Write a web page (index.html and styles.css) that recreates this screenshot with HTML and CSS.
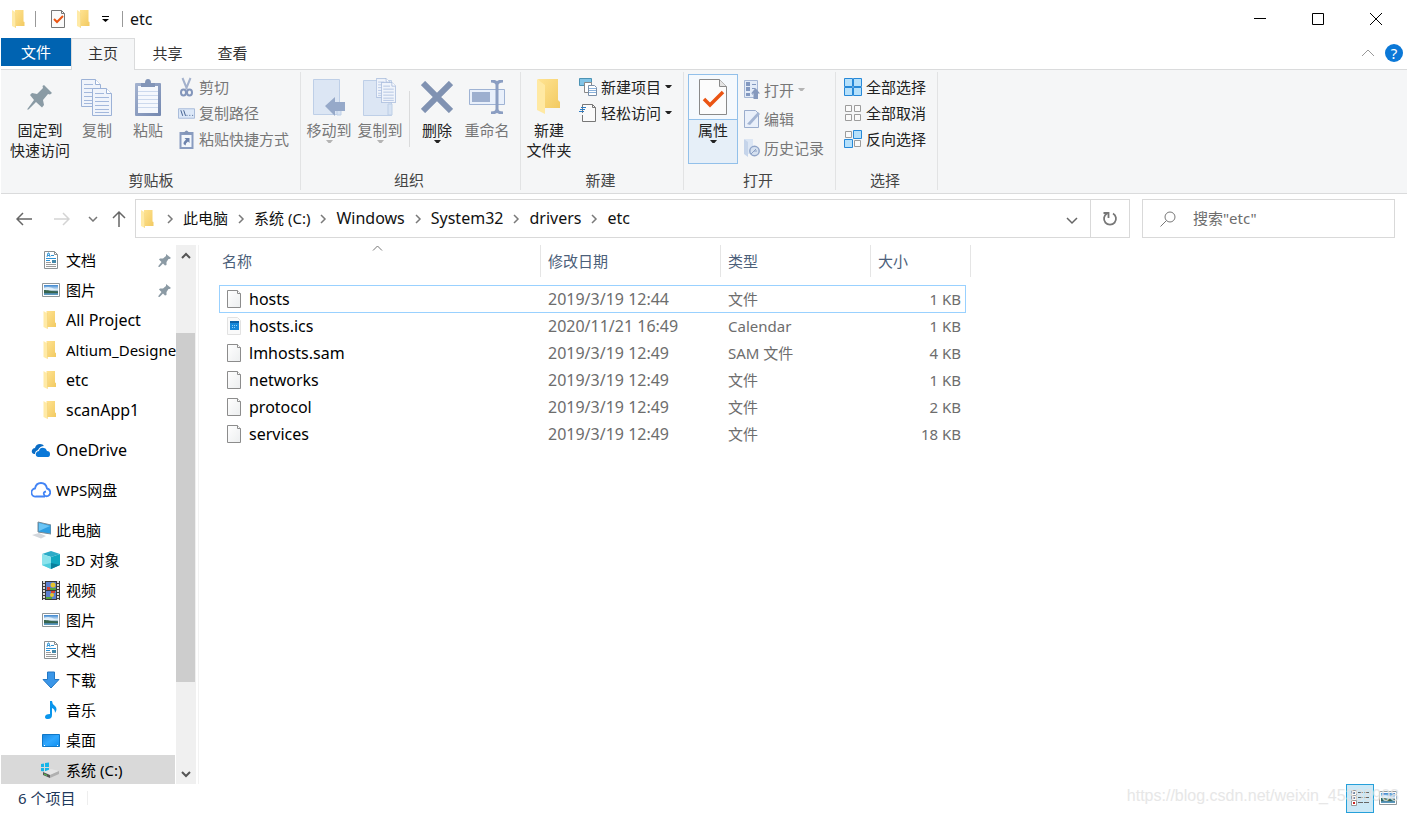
FILE: index.html
```html
<!DOCTYPE html>
<html lang="zh-CN">
<head>
<meta charset="utf-8">
<title>etc</title>
<link rel="stylesheet" href="styles.css">
</head>
<body>
<svg class="sprite" aria-hidden="true">
  <defs>
    <linearGradient id="g-folder" x1="0" y1="0" x2="1" y2="1"><stop offset="0" stop-color="#ffe391"/><stop offset="1" stop-color="#f2ca62"/></linearGradient>
    <linearGradient id="g-paper" x1="0" y1="0" x2="1" y2="1"><stop offset="0" stop-color="#fff"/><stop offset="1" stop-color="#eceeef"/></linearGradient>
    <linearGradient id="g-sky" x1="0" y1="0" x2="0" y2="1"><stop offset="0" stop-color="#3b85cf"/><stop offset=".5" stop-color="#e6f3fa"/><stop offset=".65" stop-color="#3e6d77"/><stop offset="1" stop-color="#5fa0ca"/></linearGradient>
    <linearGradient id="g-blue" x1="0" y1="0" x2="1" y2="1"><stop offset="0" stop-color="#1a86e0"/><stop offset=".5" stop-color="#30a8ff"/><stop offset="1" stop-color="#0f8ff0"/></linearGradient>
    <linearGradient id="g-clip" x1="0" y1="0" x2="1" y2="1"><stop offset="0" stop-color="#a4b3d0"/><stop offset="1" stop-color="#7488b0"/></linearGradient>
  </defs>
  <symbol id="folder" viewBox="0 0 13 18">
    <path d="M3 0h8.500v11.500l1 .5v4H3z" fill="url(#g-folder)"/>
    <path d="M0 0l4 2.500v15.500l-4-2z" fill="#ffeaa6"/><path d="M3.500 2l.5.500v15.500l-.5-.5z" fill="#f2cf72"/>
  </symbol>
  <symbol id="file" viewBox="0 0 16 20">
    <path d="M1.500 1.500h10l3 3v14h-13z" fill="url(#g-paper)" stroke="#8c8c8c"/>
    <path d="M11.500 1.500v3h3" fill="#fff" stroke="#8c8c8c"/>
  </symbol>
  <symbol id="doc" viewBox="0 0 18 20">
    <path d="M2.500 1.500h10l3 3v14h-13z" fill="#fff" stroke="#8a9092"/><path d="M12.500 1.500v3h3" fill="none" stroke="#8a9092"/>
    <path d="M5 7l1-4h1l1 4M5.500 5.500h2M9 5.500h3M4 8.500h10M4 10.500h4" stroke="#2f93d6" fill="none"/>
    <path d="M4 12.500h5M4 14.500h10M4 16.500h10" stroke="#9b9b9b"/><path d="M10 10h4v3h-4z" fill="#4388aa"/>
  </symbol>
  <symbol id="picture" viewBox="0 0 18 14">
    <path d="M.5.500h17v13H.5z" fill="#fff" stroke="#8f979a"/><path d="M2 2h14v10H2z" fill="url(#g-sky)"/>
    <path d="M2 7c3 0 7 1 14 2v1H2z" fill="#37654d"/><path d="M2 5q5-3 12 2H2z" fill="#e8f4fb" opacity=".8"/>
  </symbol>
  <symbol id="smallpin" viewBox="0 0 13 13">
    <path d="M8 0l5 4-1.500 1-1 0-2 3v3l-1.500.500L5 9.500 1.500 13 0 12.500 3.500 8 1 5.500 2 4.500h3L8 2z" fill="#8b9aa4"/>
  </symbol>
  <symbol id="chevron" viewBox="0 0 26 12"><path d="M11 2l4 4-4 4" fill="none" stroke="#7a7a7a" stroke-width="1.500"/></symbol>
  <symbol id="caret" viewBox="0 0 7 4"><path d="M0 0h7L4.500 3h-2z" fill="currentColor"/></symbol>
  <symbol id="sheet" viewBox="0 0 20 28">
    <path d="M.5.500h14l5 5v22H.5z" fill="#f0f4fb" stroke="#9cb2d7"/><path d="M14.500.5v5h5" fill="#fff" stroke="#9cb2d7"/>
    <path d="M3 5.500h9M3 9.500h14M3 13.500h14M3 17.500h14M3 21.500h14M3 24.500h14" stroke="#a3b8dc"/>
  </symbol>
  <symbol id="checked" viewBox="0 0 28 36">
    <path d="M.5.500h20l7 7v28H.5z" fill="#fcfcfc" stroke="#8a8a8a"/><path d="M20.500.5v7h7" fill="#e4e4e4" stroke="#8a8a8a"/>
    <path d="M5 20l6 6L24 13" fill="none" stroke="#ea5413" stroke-width="3.500"/>
  </symbol>
</svg>

<header class="titlebar">
  <svg class="ico-folder"><use href="#folder"/></svg>
  <span class="bar"></span>
  <button class="quick" aria-label="属性"><svg width="14" height="18" viewBox="0 0 14 18"><path d="M.5.500h10l3 3v14H.5z" fill="#fafafa" stroke="#777"/><path d="M10.500.5v3h3" fill="none" stroke="#777"/><path d="M3 9l3 3 6-6" fill="none" stroke="#ea5413" stroke-width="2"/></svg></button>
  <button class="quick" aria-label="新建文件夹"><svg class="ico-folder"><use href="#folder"/></svg></button>
  <button class="quick quick-more" aria-label="自定义快速访问工具栏"><svg width="7" height="6" viewBox="0 0 7 6"><path d="M0 .500h7" stroke="#000"/><path d="M0 3h7L3.500 6z"/></svg></button>
  <span class="bar"></span>
  <h1 class="title">etc</h1>
  <div class="caption">
    <button aria-label="最小化"><svg width="12" height="12"><path d="M0 5.500h12" stroke="#000"/></svg></button>
    <button aria-label="最大化"><svg width="12" height="12"><path d="M.5.500h11v11H.5z" fill="none" stroke="#000"/></svg></button>
    <button aria-label="关闭"><svg width="12" height="12"><path d="M0 0l12 12M12 0L0 12" stroke="#000"/></svg></button>
  </div>
</header>

<nav class="tabs">
  <button class="tab tab-file">文件</button>
  <button class="tab tab-active">主页</button>
  <button class="tab">共享</button>
  <button class="tab">查看</button>
  <div class="tab-tools">
    <button aria-label="最小化功能区"><svg width="14" height="8"><path d="M1 7l6-6 6 6" fill="none" stroke="#999"/></svg></button>
    <button class="help" aria-label="帮助">?</button>
  </div>
</nav>

<div class="ribbon">
  <section class="group g-clipboard">
    <div class="tools">
      <button class="big w60"><span class="pic"><svg width="26" height="26" viewBox="0 0 26 26"><path d="M17 1l8 8-2 1.500-2-.5-5 6 1 5-2 2.500-6-5.500-7.500 7.500L0 25.500 7 16 3 11l2-2 5 1 6-6-.5-2z" fill="#8a9ba5"/></svg></span>固定到<br>快速访问</button>
      <button class="big w54 off"><span class="pic"><svg width="32" height="37" viewBox="0 0 32 37"><use href="#sheet" width="20" height="28"/><use href="#sheet" x="11" y="9" width="20" height="28"/></svg></span>复制</button>
      <button class="big w48 off"><span class="pic"><svg width="26" height="37" viewBox="0 0 26 37"><rect y="4" width="26" height="33" rx="1" fill="url(#g-clip)"/><path d="M3 7h20v27H3z" fill="#f5f8fd"/><path d="M3 12.500h20M3 16.500h20M3 20.500h20M3 24.500h20M3 28.500h20" stroke="#ccd9ed"/><path d="M6 8V4h4q0-4 3-4t3 4h4v4z" fill="#8295b8"/></svg></span>粘贴</button>
      <div class="stack off">
        <button><svg width="16" height="20" viewBox="0 0 16 20"><path d="M4 1l4.500 11M12 1L7.500 12" stroke="#a3b1cc" stroke-width="2"/><g fill="none" stroke="#8396bb" stroke-width="2"><ellipse cx="5" cy="15.500" rx="2.500" ry="3"/><ellipse cx="11" cy="15.500" rx="2.500" ry="3"/></g></svg>剪切</button>
        <button><svg width="18" height="11" viewBox="0 0 18 11"><path d="M.5.500h17v10H.5z" fill="#dce8f8" stroke="#a5b8d8"/><path d="M3 2l2 6M6 2l2 6M9 7.500h1M12 7.500h1M15 7.500h1" stroke="#3f5c8d"/></svg>复制路径</button>
        <button><svg width="16" height="19" viewBox="0 0 16 19"><path d="M1 2h14v17H1z" fill="#899cc0"/><path d="M3 5h10v12H3z" fill="#f3f7fc"/><path d="M5 4V2h1q2-3 4 0h1v2z" fill="#8295b8"/><path d="M6 8h5v5l-1.500-1.500Q7 13 7 15.500L5 14q0-2.500 2.500-4.500z" fill="#6d83ad"/></svg>粘贴快捷方式</button>
      </div>
    </div>
    <h2>剪贴板</h2>
  </section>

  <section class="group g-organize">
    <div class="tools">
      <button class="big w52 off"><span class="pic"><svg width="32" height="37" viewBox="0 0 32 37"><path d="M.5.500h26v35H.5z" fill="#dce6f4" stroke="#becfe7"/><path d="M24 24h4v12h-4z" fill="#d7e3f3" stroke="#becfe7"/><path d="M12 27l10-9v5h10v9H22v5z" fill="#96a9c9"/></svg></span>移动到<svg class="caret"><use href="#caret"/></svg></button>
      <button class="big w50 off"><span class="pic"><svg width="34" height="38" viewBox="0 0 34 38"><path d="M.5 2.500h28v35H.5z" fill="#dce6f4" stroke="#becfe7"/><path d="M25 26h4v11h-4z" fill="#d7e3f3" stroke="#becfe7"/><use href="#sheet" x="13" y="0" width="14" height="20"/><use href="#sheet" x="18" y="4" width="15" height="21"/></svg></span>复制到<svg class="caret"><use href="#caret"/></svg></button>
      <span class="tool-rule"></span>
      <button class="big w46"><span class="pic"><svg width="32" height="32" viewBox="0 0 32 32"><path d="M2 2l28 28M30 2L2 30" stroke="#8092b2" stroke-width="6"/></svg></span>删除<svg class="caret"><use href="#caret"/></svg></button>
      <button class="big w54 off"><span class="pic"><svg width="36" height="34" viewBox="0 0 36 34"><path d="M.5 9.500h35v15H.5z" fill="#e9f0fb" stroke="#9fb3d4"/><path d="M3 12h18v10H3z" fill="#9dafcf"/><path d="M28 3v28M22 1q6 0 6 4 0-4 6-4M22 33q6 0 6-4 0 4 6 4" fill="none" stroke="#8b9ec2" stroke-width="3"/></svg></span>重命名</button>
    </div>
    <h2>组织</h2>
  </section>

  <section class="group g-new">
    <div class="tools">
      <button class="big w48"><span class="pic"><svg width="25" height="36" viewBox="0 0 25 36"><path d="M1 0h20v21l2 2v6H7z" fill="url(#g-folder)"/><path d="M0 0l8 6v29l-8-4z" fill="#ffe9a3"/></svg></span>新建<br>文件夹</button>
      <div class="stack">
        <button><svg width="18" height="18" viewBox="0 0 18 18"><path d="M.5.500h12v7H.5z" fill="#82c4e6" stroke="#4c93b4"/><path d="M5.500 4.500h7v10h-7z" fill="#fff" stroke="#888"/><path d="M9.500 7.500h6l2 2v8h-8z" fill="#fff" stroke="#7a8fa8"/><path d="M10 10.500h7M10 12.500h7M10 14.500h7" stroke="#8ab2dc"/></svg>新建项目<svg class="caret"><use href="#caret"/></svg></button>
        <button><svg width="18" height="18" viewBox="0 0 18 18"><path d="M3.500 9V.500h10l3 3v14h-13V11" fill="#fafafa" stroke="#777"/><path d="M13.500.5v3h3" fill="none" stroke="#777"/><path d="M2 3.500h5M1 5.500h5M0 7.500h5" stroke="#2c7cc4"/></svg>轻松访问<svg class="caret"><use href="#caret"/></svg></button>
      </div>
    </div>
    <h2>新建</h2>
  </section>

  <section class="group g-open">
    <div class="tools">
      <button class="big w50 big-hot"><span class="pic"><svg width="28" height="36"><use href="#checked"/></svg></span>属性<svg class="caret"><use href="#caret"/></svg></button>
      <div class="stack stack-loose off">
        <button><svg width="16" height="19" viewBox="0 0 16 19"><path d="M.5.500h13v17H.5z" fill="#e3ebf7" stroke="#a6b7d5"/><path d="M2 2h4v4H2zM2 7h4v4H2zM2 13h4v3H2z" fill="#8298c0"/><path d="M8 4.500h4M8 8.500h3M8 14h1" stroke="#8298c0"/><path d="M11.500 8l4.500 5.500h-2V19H9.500v-5.500H7z" fill="#8699bd"/></svg>打开<svg class="caret"><use href="#caret"/></svg></button>
        <button><svg width="16" height="18" viewBox="0 0 16 18"><path d="M.5.500h11l3 3v14H.5z" fill="#eaf0fa" stroke="#9badcd"/><path d="M3 14L14 2l2 2L6 15z" fill="#a4b5d3"/></svg>编辑</button>
        <button><svg width="16" height="18" viewBox="0 0 16 18"><path d="M1 0h8v15H1z" fill="#dce6f4"/><path d="M0 0l4 3v15l-4-3z" fill="#c5d4ea"/><circle cx="10.500" cy="12" r="4.700" fill="#d6e1f0" stroke="#91a5c8" stroke-width="1.500"/><path d="M7 15l5-5M10 12h3" stroke="#8ba0c4"/></svg>历史记录</button>
      </div>
    </div>
    <h2>打开</h2>
  </section>

  <section class="group g-select">
    <div class="tools">
      <div class="stack">
        <button><svg width="18" height="18" viewBox="0 0 18 18"><g fill="#b5e0fb" stroke="#2789d8"><path d="M.5.500h8v8h-8zM9.500.500h8v8h-8zM.5 9.500h8v8h-8zM9.500 9.500h8v8h-8z"/></g></svg>全部选择</button>
        <button><svg width="18" height="18" viewBox="0 0 18 18"><g fill="#fafafa" stroke="#9c9c9c"><path d="M1.500 1.500h6v6h-6zM10.500 1.500h6v6h-6zM1.500 10.500h6v6h-6zM10.500 10.500h6v6h-6z"/></g></svg>全部取消</button>
        <button><svg width="18" height="18" viewBox="0 0 18 18"><path d="M1.500 1.500h6v6h-6zM10.500 10.500h6v6h-6z" fill="#fafafa" stroke="#9c9c9c"/><path d="M9.500.500h8v8h-8zM.5 9.500h8v8h-8z" fill="#b5e0fb" stroke="#2789d8"/></svg>反向选择</button>
      </div>
    </div>
    <h2>选择</h2>
  </section>
</div>

<div class="navbar">
  <div class="history">
    <button aria-label="返回"><svg width="16" height="14"><path d="M1 7h15M7 1L1 7l6 6" fill="none" stroke="#666" stroke-width="1.500"/></svg></button>
    <button aria-label="前进"><svg width="16" height="14"><path d="M0 7h15M9 1l6 6-6 6" fill="none" stroke="#d4d4d4" stroke-width="1.500"/></svg></button>
    <button class="recent" aria-label="最近浏览的位置"><svg width="10" height="6"><path d="M1 1l4 4 4-4" fill="none" stroke="#777" stroke-width="1.500"/></svg></button>
    <button class="up" aria-label="上移"><svg width="14" height="17"><path d="M7 17V2M1 8l6-6 6 6" fill="none" stroke="#666" stroke-width="1.500"/></svg></button>
  </div>
  <div class="address">
    <svg class="ico-folder"><use href="#folder"/></svg>
    <svg class="chev first"><use href="#chevron"/></svg><a href="#">此电脑</a>
    <svg class="chev"><use href="#chevron"/></svg><a href="#">系统 (C:)</a>
    <svg class="chev"><use href="#chevron"/></svg><a href="#" class="latin">Windows</a>
    <svg class="chev"><use href="#chevron"/></svg><a href="#" class="latin">System32</a>
    <svg class="chev"><use href="#chevron"/></svg><a href="#" class="latin">drivers</a>
    <svg class="chev"><use href="#chevron"/></svg><a href="#" class="latin">etc</a>
    <button class="drop" aria-label="以前的位置"><svg width="12" height="8"><path d="M1 1l5 5 5-5" fill="none" stroke="#666" stroke-width="1.500"/></svg></button>
    <button class="refresh" aria-label="刷新"><svg width="16" height="17" viewBox="0 0 16 17"><path d="M11 3.500a6 6 0 1 1-6 0M1.500 3h5v5" fill="none" stroke="#777" stroke-width="1.800"/></svg></button>
  </div>
  <label class="search">
    <svg width="16" height="16"><circle cx="10" cy="6" r="5" fill="none" stroke="#777"/><path d="M6.500 9.500L.5 15.500" stroke="#777"/></svg>
    <input type="text" placeholder='搜索"etc"' aria-label="搜索">
  </label>
</div>

<main class="main">
  <aside class="tree">
    <a href="#" class="lv2"><svg class="i20"><use href="#doc"/></svg><span>文档</span><svg class="pin"><use href="#smallpin"/></svg></a>
    <a href="#" class="lv2"><svg class="i14"><use href="#picture"/></svg><span>图片</span><svg class="pin"><use href="#smallpin"/></svg></a>
    <a href="#" class="lv2 latin"><svg class="i18"><use href="#folder"/></svg><span>All Project</span></a>
    <a href="#" class="lv2"><svg class="i18"><use href="#folder"/></svg><span>Altium_Designe</span></a>
    <a href="#" class="lv2 latin"><svg class="i18"><use href="#folder"/></svg><span>etc</span></a>
    <a href="#" class="lv2 latin"><svg class="i18"><use href="#folder"/></svg><span>scanApp1</span></a>
    <a href="#" class="lv1 latin"><svg width="20" height="13" viewBox="0 0 20 13"><path d="M4 10H3Q0 9 1 6q1-2 3-2 1-4 5-4 3 0 4 2-4 0-6 4-3 1-3 4z" fill="#0a6cc4"/><path d="M7 13q-3-1-2-4 1-2 3-2 1-4 5-3 2 0 3 3 3 0 3 3t-2 3z" fill="#0a78d8"/></svg><span>OneDrive</span></a>
    <a href="#" class="lv1"><svg width="20" height="16" viewBox="0 0 20 16"><path d="M14 14.500H5a4 4 0 0 1-1-8Q5 1 10 1t6 5.500a4 4 0 0 1 1 7.500q-3 1-4-1.500t2-3" fill="none" stroke="#4284f5" stroke-width="1.800"/></svg><span>WPS网盘</span></a>
    <a href="#" class="lv1"><svg width="20" height="18" viewBox="0 0 20 18"><path d="M7 1l13 3v9L7 11z" fill="#2e9ee2" stroke="#7a8b96"/><path d="M8 2l11 3-11 5z" fill="#6cc5f5"/><path d="M1 14l7-2 7 3-5 2.500z" fill="#d3d7dc"/></svg><span>此电脑</span></a>
    <a href="#" class="lv2"><svg width="18" height="18" viewBox="0 0 18 18"><path d="M9 0l9 3-9 3-9-3z" fill="#2cabc7"/><path d="M0 3l9 3v12l-9-4z" fill="#8be3ec"/><path d="M9 6l9-3v11l-9 4z" fill="#10a8c0"/><path d="M9 12l9 2-9 4z" fill="#087f9c"/><path d="M0 14l9-2v6z" fill="#4fcddd"/></svg><span>3D 对象</span></a>
    <a href="#" class="lv2"><svg width="18" height="19" viewBox="0 0 18 19"><path d="M0 0h18v19H0z" fill="#3a3a3a"/><path d="M4 1h10v8H4zM4 10h10v8H4z" fill="#5b7fd0"/><path d="M2 0v19M16 0v19" stroke="#ddd" stroke-width="2" stroke-dasharray="2 1"/><circle cx="11" cy="4" r="2.500" fill="#e5c52d"/><circle cx="10" cy="14" r="2" fill="#e5c52d"/><path d="M5 6h3v3H5zM9 10h4v2H9z" fill="#d64030"/><path d="M8 7h6v2H8zM4 16h6v2H4z" fill="#54a43e"/></svg><span>视频</span></a>
    <a href="#" class="lv2"><svg class="i14"><use href="#picture"/></svg><span>图片</span></a>
    <a href="#" class="lv2"><svg class="i20"><use href="#doc"/></svg><span>文档</span></a>
    <a href="#" class="lv2"><svg width="18" height="18" viewBox="0 0 18 18"><path d="M5.500 1h7v7.500h4.500L9 17 1 8.500h4.500z" fill="#3a96e8" stroke="#2277c4"/></svg><span>下载</span></a>
    <a href="#" class="lv2"><svg width="18" height="18" viewBox="0 0 18 18"><path d="M8 0h2q0 3 3 5 3 3 0 7 0-4-3-5v7q0 4-4 4-3 0-3-2 0-3 5-3z" fill="#0a96ec"/></svg><span>音乐</span></a>
    <a href="#" class="lv2"><svg width="18" height="13" viewBox="0 0 18 13"><path d="M.5.500h17v12H.5z" fill="url(#g-blue)" stroke="#0f78c8"/><path d="M2 11.500h1M15 11.500h1" stroke="#fff"/></svg><span>桌面</span></a>
    <a href="#" class="lv2 current"><svg width="20" height="16" viewBox="0 0 20 16"><path d="M1 2l3-.5V5H1zM5 1l4-.5V5H5zM1 6h3v3.500L1 9zM5 6h4v4l-4-.5z" fill="#16b5e8"/><path d="M3 10l8-3 8 2-9 4z" fill="#e5e5e5"/><path d="M10 13l9-4v3l-9 4z" fill="#b0b0b0"/><path d="M3 10l7 3v3l-7-3z" fill="#555"/><path d="M4 12l3 1.500" stroke="#56d34f"/></svg><span>系统 (C:)</span></a>
  </aside>
  <div class="scroll">
    <button aria-label="向上滚动"><svg width="10" height="7"><path d="M1 6l4-4 4 4" fill="none" stroke="#555" stroke-width="2"/></svg></button>
    <span class="track-before"></span><span class="thumb"></span><span class="track-after"></span>
    <button aria-label="向下滚动"><svg width="10" height="7"><path d="M1 1l4 4 4-4" fill="none" stroke="#555" stroke-width="2"/></svg></button>
  </div>
  <div class="list">
    <table>
      <thead><tr>
        <th class="c-name">名称<svg class="sort" width="11" height="6"><path d="M1 5.500l4.500-4.500L10 5.500" fill="none" stroke="#777"/></svg></th>
        <th class="c-date">修改日期</th><th class="c-type">类型</th><th class="c-size">大小</th>
      </tr></thead>
      <tbody>
        <tr class="focus"><td><svg class="fi"><use href="#file"/></svg>hosts</td><td>2019/3/19 12:44</td><td>文件</td><td>1 KB</td></tr>
        <tr><td><svg class="fi" viewBox="0 0 16 20"><path d="M1.500 1.500h10l3 3v14h-13z" fill="#fafafa" stroke="#e2e2e2"/><path d="M4 5h9v9H4z" fill="#1687d9"/><path d="M4 5h9v2H4z" fill="#0b62a8"/><path d="M6 9.500h6M6 11.500h4" stroke="#8fd0f6" stroke-dasharray="1 1"/></svg>hosts.ics</td><td>2020/11/21 16:49</td><td>Calendar</td><td>1 KB</td></tr>
        <tr><td><svg class="fi"><use href="#file"/></svg>lmhosts.sam</td><td>2019/3/19 12:49</td><td>SAM 文件</td><td>4 KB</td></tr>
        <tr><td><svg class="fi"><use href="#file"/></svg>networks</td><td>2019/3/19 12:49</td><td>文件</td><td>1 KB</td></tr>
        <tr><td><svg class="fi"><use href="#file"/></svg>protocol</td><td>2019/3/19 12:49</td><td>文件</td><td>2 KB</td></tr>
        <tr><td><svg class="fi"><use href="#file"/></svg>services</td><td>2019/3/19 12:49</td><td>文件</td><td>18 KB</td></tr>
      </tbody>
    </table>
  </div>
</main>

<footer class="status">
  <span class="count">6 个项目</span>
  <div class="views">
    <button class="view view-on" aria-label="详细信息"><svg width="18" height="16" viewBox="0 0 18 16"><g fill="#fff" stroke="#999"><path d="M.5.500h5v5h-5zM.5 5.500h5v5h-5zM.5 10.500h5v5h-5z"/></g><path d="M2 3h2M2 8h2" stroke="#68a" stroke-width="2"/><path d="M2 13h2" stroke="#c22" stroke-width="2"/><path d="M7 2.500h5M13 2.500h5M7 7.500h5M13 7.500h5M7 12.500h5M13 12.500h5" stroke="#666"/></svg></button>
    <button class="view" aria-label="大图标"><svg class="i14"><use href="#picture"/></svg></button>
  </div>
  <span class="watermark">https://blog.csdn.net/weixin_45388908</span>
</footer>
</body>
</html>
```
FILE: styles.css
```css
* { box-sizing: border-box; }

body {
  margin: 0;
  height: 100vh;
  display: flex;
  flex-direction: column;
  padding: 0 1px;
  background: #fff;
  color: #111;
  font: 15px/20px "Noto Sans", "Noto Sans CJK SC", sans-serif;
  overflow: hidden;
}

button {
  margin: 0;
  padding: 0;
  border: 0;
  background: none;
  color: inherit;
  font: inherit;
}

a { color: inherit; text-decoration: none; }
svg { flex: none; }
h1, h2 { margin: 0; font-weight: 400; }

.sprite { position: absolute; width: 0; height: 0; }
.latin { font-size: 16px; }
.ico-folder { width: 13px; height: 18px; display: block; }
.i14 { width: 18px; height: 14px; }
.i18 { width: 18px; height: 18px; }
.i20 { width: 18px; height: 20px; }

/* Title bar */
.titlebar { display: flex; align-items: center; height: 38px; padding-left: 11px; flex: none; }
.bar { width: 1px; height: 16px; background: #999; margin: 0 15px 0 10px; }
.quick { display: flex; margin-right: 12px; }
.quick-more { margin: 0 3px 0 0; }
.quick-more + .bar { margin-right: 7px; }
.title { font-size: 16px; }
.caption { margin: 0 2px 0 auto; display: flex; }
.caption button { width: 58px; height: 38px; display: flex; align-items: center; justify-content: center; }

/* Tabs */
.tabs { display: flex; height: 32px; flex: none; border-bottom: 1px solid #dadbdc; }
.tab { width: 65px; height: 31px; padding-bottom: 2px; color: #333; }
.tab-file { width: 70px; height: 28px; padding: 0; background: #0063b1; color: #fff; }
.tab-active { width: 64px; height: 32px; padding-bottom: 3px; background: #f5f6f7; border: 1px solid #dadbdc; border-bottom: 0; }
.tab-tools { margin-left: auto; display: flex; align-items: center; gap: 10px; padding: 0 4px 2px 0; }
.tab-tools button { display: flex; }
.tab-tools .help {
  width: 18px;
  height: 18px;
  border-radius: 50%;
  background: #0b78d7;
  color: #fff;
  justify-content: center;
  line-height: 18px;
}

/* Ribbon */
.ribbon { display: flex; flex: none; height: 124px; background: #f5f6f7; border-bottom: 1px solid #dadbdc; }
.group { display: flex; flex-direction: column; padding: 4px 0 3px; position: relative; }
.group::after { content: ""; position: absolute; right: 0; top: 2px; bottom: 3px; width: 1px; background: #e2e3e4; }
.group h2 { font-size: 15px; text-align: center; color: #444; margin-top: auto; padding-right: 4px; }
.g-clipboard h2 { padding-right: 0; }
.tools { display: flex; align-items: flex-start; }
.g-clipboard { width: 300px; }
.g-clipboard .tools { padding-left: 9px; }
.g-organize { width: 220px; }
.g-organize .tools { padding-left: 2px; }
.g-new { width: 163px; }
.g-new .tools, .g-open .tools { padding-left: 4px; }
.g-open { width: 152px; }
.g-select { width: 102px; }
.g-select .tools { padding-left: 8px; }
.g-select .stack { margin-left: 0; }

.big { display: flex; flex-direction: column; justify-content: flex-start; align-items: center; height: 90px; text-align: center; color: #222; white-space: nowrap; line-height: 20px; }
.pic { display: flex; height: 46px; align-items: center; justify-content: center; }
.big-hot { background: linear-gradient(#f5f9fd 0 45px, #92c0ea 45px 46px, #e6eff8 46px); outline: 1px solid #92c0ea; outline-offset: -1px; }
.w46 { width: 46px; }
.w48 { width: 48px; }
.w50 { width: 50px; }
.w52 { width: 52px; }
.w54 { width: 54px; }
.w60 { width: 60px; }
.off, .off button { color: #777; }
.caret { width: 7px; height: 4px; }
.off .caret { color: #b4b4b4; }
.tool-rule { width: 1px; height: 56px; margin: 17px 4px 0; background: #dadbdc; }

.stack { display: flex; flex-direction: column; margin-left: 6px; color: #222; }
.stack button { display: flex; align-items: center; gap: 4px; height: 26px; white-space: nowrap; }
.stack-loose { padding-top: 1px; }
.stack-loose button { height: 29px; }
.g-clipboard .stack svg { width: 17px; }

/* Address row */
.navbar { display: flex; flex: none; padding: 5px 12px 7px 0; height: 51px; }
.history { display: flex; align-items: center; width: 134px; padding-left: 15px; gap: 22px; }
.history button { display: flex; }
.history .recent { margin-left: -4px; }
.history .up { margin-left: -8px; }
.address { flex: 1; display: flex; align-items: center; border: 1px solid #d9d9d9; padding-left: 5px; min-width: 0; white-space: nowrap; }
.address a { color: #111; padding-bottom: 2px; }
.chev { width: 26px; height: 12px; }
.chev.first { margin-left: 3px; }
.drop { margin-left: auto; width: 36px; height: 37px; }
.refresh { width: 39px; height: 37px; border-left: 1px solid #d9d9d9; display: flex; align-items: center; justify-content: center; }
.search { width: 253px; margin-left: 12px; display: flex; align-items: center; gap: 17px; padding-left: 17px; border: 1px solid #d9d9d9; }
.search input { border: 0; outline: 0; padding: 0 0 2px; flex: 1; min-width: 0; font: inherit; background: none; }
.search input::placeholder { color: #6d6d6d; opacity: 1; }

/* Body */
.main { flex: 1; display: flex; min-height: 0; overflow: hidden; }
.tree { width: 174px; flex: none; color: #000; }
.tree a { display: flex; align-items: center; height: 30px; gap: 6px; white-space: nowrap; }
.tree .lv2 { padding-left: 41px; }
.tree .lv1 { padding-left: 30px; gap: 5px; margin-top: 10px; }
.tree .i18 { margin-left: -1px; margin-right: 1px; }
.tree a .pin { width: 13px; height: 13px; margin: 0 4px 0 auto; }
.tree .current { background: #d9d9d9; padding-left: 39px; }
.scroll { width: 20px; margin-left: 1px; background: #f0f0f0; display: flex; flex-direction: column; flex: none; }
.scroll button { height: 20px; padding-right: 1px; display: flex; align-items: center; justify-content: center; }
.track-before { flex: 68; }
.thumb { flex: 349; width: 19px; background: #cdcdcd; }
.track-after { flex: 82; }
.list { flex: 1; margin-left: 2px; border-left: 1px solid #f2f2f2; padding-left: 20px; }

table { border-spacing: 0; table-layout: fixed; width: 752px; }
th { position: relative; height: 32px; padding: 0 0 0 7px; text-align: left; font-weight: 400; color: #4c607a; border-right: 1px solid #e5e5e5; }
.c-name { width: 322px; padding-left: 3px; }
.c-date { width: 180px; }
.c-type { width: 150px; }
.c-size { width: 100px; }
.sort { position: absolute; left: 153px; top: 0; }
thead::after { content: ""; display: block; height: 8px; }
tbody tr { position: relative; }
td { height: 27px; padding: 0 0 0 7px; color: #6d6d6d; }
td:first-child { color: #000; font-size: 16px; }
td:nth-child(2) { font-size: 16px; }
td:last-child { padding: 0 10px 0 0; text-align: right; }
.fi { width: 16px; height: 20px; margin-right: 7px; vertical-align: -4px; }
.focus::after { content: ""; position: absolute; inset: 0 5px -1px 0; border: 1px solid #99d1ff; }

/* Status bar */
.status { position: relative; display: flex; align-items: center; height: 30px; flex: none; padding-bottom: 2px; color: #1e395b; }
.count { padding: 0 12px 0 17px; border-right: 1px solid #eee; line-height: 14px; }
.views { margin-left: auto; display: flex; padding-right: 5px; }
.view { width: 28px; height: 29px; display: flex; align-items: center; justify-content: center; }
.view-on { background: #cce8f6; border: 1px solid #26a0da; }
.watermark { position: absolute; right: 8px; top: 2px; font: 16px/20px "Liberation Sans", sans-serif; color: #e3e3e3; opacity: 0.85; }
```
